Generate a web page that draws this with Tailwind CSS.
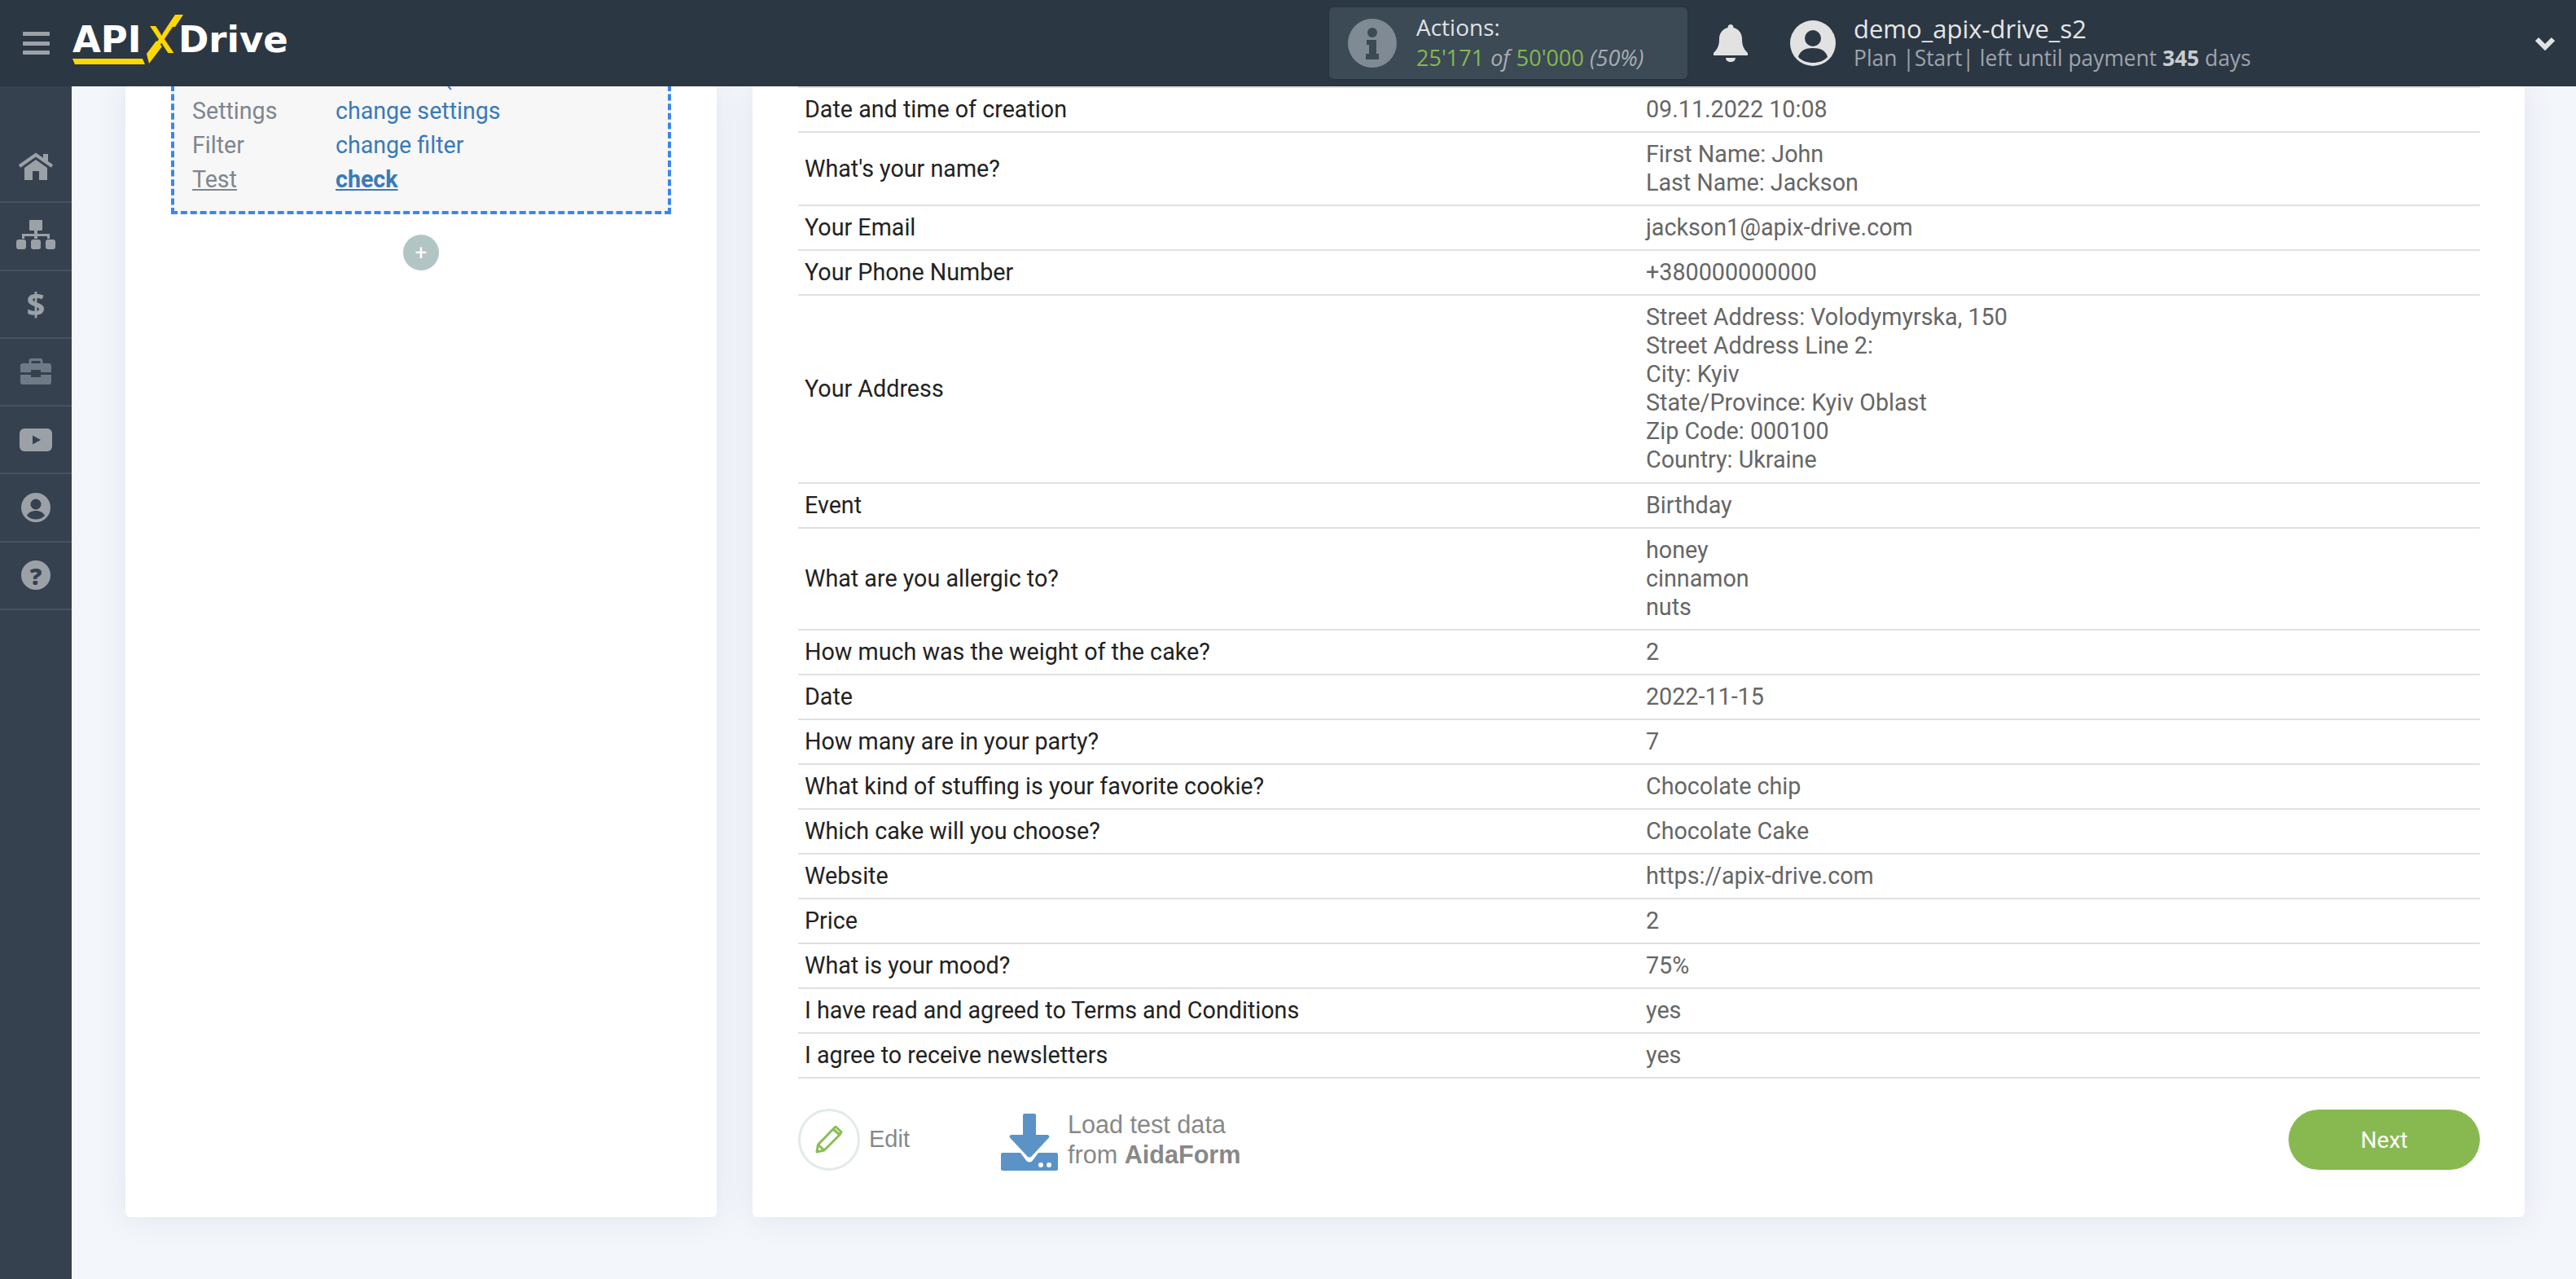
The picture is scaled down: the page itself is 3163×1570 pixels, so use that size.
<!doctype html>
<html lang="en">
<head>
<meta charset="utf-8">
<title>ApiX-Drive</title>
<script src="https://cdn.jsdelivr.net/npm/@tailwindcss/browser@4"></script>
</head>
<body class="h-[1570px] overflow-hidden bg-[#f3f6fb] font-['Roboto',sans-serif]">
  <!-- top bar -->
  <header class="relative z-10 flex h-[106px] items-center bg-[#2c3744] font-['Open_Sans',sans-serif]">
    <div class="ml-[28px] flex h-[28px] w-[33px] flex-col justify-between">
      <span class="h-[5px] rounded-[1px] bg-[#9ba1a7]"></span>
      <span class="h-[5px] rounded-[1px] bg-[#9ba1a7]"></span>
      <span class="h-[5px] rounded-[1px] bg-[#9ba1a7]"></span>
    </div>
    <!-- logo -->
    <div class="relative ml-[28px] h-[106px] w-[270px] font-['DejaVu_Sans',sans-serif] text-[45px] leading-none font-bold text-white">
      <span class="absolute left-0 top-[26px]">API</span>
      <span class="absolute left-[93px] top-[26px] font-['Inter',sans-serif] font-semibold text-[#ffd800]">X</span>
      <span class="absolute left-[130px] top-[26px]">Drive</span>
      <svg class="absolute left-0 top-0" width="270" height="106" viewBox="0 0 270 106">
        <path fill="#ffd800" d="M0 72h86l3 7H3zM126 33l10-15h-10l-10 15zM103 50 91 66l3 12 16-21z"/>
      </svg>
    </div>
    <div class="ml-[1273px] flex h-[88px] w-[440px] items-center rounded-md bg-[#3c4a55] shadow-sm">
      <svg class="ml-[23px] shrink-0" width="60" height="60" viewBox="0 0 60 60">
        <circle cx="30" cy="30" r="30" fill="#808a94"/>
        <circle cx="30" cy="17" r="6" fill="#3c4a55"/>
        <path fill="#3c4a55" d="M23 26h12v17h3v7H22v-7h4V32h-3z"/>
      </svg>
      <div class="ml-[24px] -mt-[2px] leading-[37px]">
        <div class="text-[28px] text-[#dfe2e5]">Actions:</div>
        <div class="text-[27px] text-[#a7adb3]"><span class="text-[#85b84e]">25'171</span> <i class="mx-[1px]">of</i> <span class="text-[#85b84e]">50'000</span> <i>(50%)</i></div>
      </div>
    </div>
    <svg class="ml-[32px] shrink-0" width="42" height="46" viewBox="0 0 42 46">
      <path fill="#e2e2e2" d="M21 0c2 0 3.500 1.500 3.500 4 7 1.500 10.500 7.500 10.500 14 0 9 3 13 7 17v3H0v-3c4-4 7-8 7-17 0-6.500 3.500-12.500 10.500-14C17.500 1.500 19 0 21 0zM15 41h12c0 3-2.500 5-6 5s-6-2-6-5z"/>
    </svg>
    <svg class="ml-[52px] shrink-0" width="56" height="56" viewBox="0 0 56 56">
      <circle cx="28" cy="28" r="28" fill="#e2e2e2"/>
      <circle cx="28" cy="22" r="10" fill="#2c3744"/>
      <path fill="#2c3744" d="M10 45c2-8 9-11 18-11s16 3 18 11c-5 5-11 7-18 7s-13-2-18-7z"/>
    </svg>
    <div class="ml-[22px] text-[#e6e6e6]">
      <div class="text-[31px] leading-[36px]">demo_apix-drive_s2</div>
      <div class="text-[26.400px] leading-[36px] text-[#9ea4aa]">Plan |Start| left until payment <b class="text-[#c9cccf]">345</b> days</div>
    </div>
    <svg class="ml-auto mr-[26px] shrink-0" width="24" height="18" viewBox="0 0 24 18">
      <path fill="none" stroke="#e2e2e2" stroke-width="6" d="M2 4l10 10L22 4"/>
    </svg>
  </header>

  <div class="flex h-[1464px]">
    <!-- side nav -->
    <nav class="w-[88px] shrink-0 bg-[#364150] pt-[60px]">
      <div class="flex h-[83.3px] items-center justify-center border-b-2 border-[#465260] pb-[5px]">
        <svg width="44" height="34" viewBox="0 0 44 34">
          <path fill="none" stroke="#9ba1a7" stroke-width="4" d="M2 17 22 3l20 14"/>
          <path fill="#9ba1a7" d="M31 2h6v11l-6-4zM8 19 22 9l14 10v15H26V23h-8v11H8z"/>
        </svg>
      </div>
      <div class="flex h-[83.3px] items-center justify-center border-b-2 border-[#465260] pb-[4px]">
        <svg width="48" height="36" viewBox="0 0 48 36">
          <path fill="#9ba1a7" d="M17 0h14a1 1 0 0 1 1 1v11a1 1 0 0 1-1 1h-5v4h15v6h-3v-3H26v3h-4v-3H10v3H7v-6h15v-4h-5a1 1 0 0 1-1-1V1a1 1 0 0 1 1-1z"/>
          <rect x="0" y="24" width="12" height="12" rx="3" fill="#9ba1a7"/>
          <rect x="18" y="24" width="12" height="12" rx="3" fill="#9ba1a7"/>
          <rect x="36" y="24" width="12" height="12" rx="3" fill="#9ba1a7"/>
        </svg>
      </div>
      <div class="flex h-[83.3px] items-center justify-center border-b-2 border-[#465260] font-['Open_Sans',sans-serif] text-[40px] leading-none font-bold text-[#9ba1a7]">$</div>
      <div class="flex h-[83.3px] items-center justify-center border-b-2 border-[#465260] pb-[2px]">
        <svg width="38" height="32" viewBox="0 0 38 32">
          <path fill="none" stroke="#6f7a87" stroke-width="3" d="M12 7V3a1.500 1.500 0 0 1 1.500-1.500h11A1.500 1.500 0 0 1 26 3v4"/>
          <path fill="#6f7a87" d="M3 6h32a3 3 0 0 1 3 3v8H25v-3H13v3H0V9a3 3 0 0 1 3-3zM0 20h13v3h12v-3h13v9a3 3 0 0 1-3 3H3a3 3 0 0 1-3-3z"/>
        </svg>
      </div>
      <div class="flex h-[83.3px] items-center justify-center border-b-2 border-[#465260]">
        <svg width="40" height="28" viewBox="0 0 40 28">
          <rect width="40" height="28" rx="6" fill="#9ba1a7"/>
          <path fill="#364150" d="M16 8.500v11l10-5.500z"/>
        </svg>
      </div>
      <div class="flex h-[83.3px] items-center justify-center border-b-2 border-[#465260]">
        <svg width="36" height="36" viewBox="0 0 36 36">
          <circle cx="18" cy="18" r="18" fill="#9ba1a7"/>
          <circle cx="18" cy="14" r="6.500" fill="#364150"/>
          <path fill="#364150" d="M7 28c2-4 6-6 11-6s9 2 11 6c-3 3-7 4.500-11 4.500S10 31 7 28z"/>
        </svg>
      </div>
      <div class="flex h-[83.3px] items-center justify-center border-b-2 border-[#465260]">
        <div class="flex h-[36px] w-[36px] items-center justify-center rounded-full bg-[#9ba1a7] font-['Open_Sans',sans-serif] text-[29px] leading-none font-extrabold text-[#364150]">?</div>
      </div>
    </nav>

    <main class="flex min-w-0 flex-1 items-start overflow-hidden">
      <!-- left card: steps -->
      <section class="ml-[66px] h-[1388px] w-[726px] rounded-b-md bg-white shadow-[0_0_40px_rgba(40,60,90,0.09)]">
        <div class="mx-[56px] -mt-[37px] border-4 border-dashed border-[#3b86f0] bg-[#f7f7f7] pb-[18px] pl-[22px] text-[28.600px] leading-[42px] text-[#7d8690]">
          <div class="grid grid-cols-[176px_1fr]"><span></span><span class="ml-[133px] text-[#3a7ab8]">(</span></div>
          <div class="grid grid-cols-[176px_1fr]"><span>Settings</span><a class="text-[#3a7ab8]">change settings</a></div>
          <div class="grid grid-cols-[176px_1fr]"><span>Filter</span><a class="text-[#3a7ab8]">change filter</a></div>
          <div class="grid grid-cols-[176px_1fr]"><span class="underline">Test</span><a class="font-bold text-[#3a7ab8] underline">check</a></div>
        </div>
        <div class="mt-[25px] flex justify-center">
          <div class="flex h-[44px] w-[44px] items-center justify-center rounded-full bg-[#b2c5c5] text-[26px] leading-none text-white">+</div>
        </div>
      </section>

      <!-- right card: test data -->
      <section class="ml-[44px] h-[1388px] w-[2176px] rounded-b-md bg-white pl-[56px] pr-[55px] shadow-[0_0_40px_rgba(40,60,90,0.09)]">
        <div class="border-t-2 border-[#e0e0e0] text-[28.700px] leading-[35px] text-[#666]">
          <div class="grid grid-cols-[1041px_1fr] items-center border-b-2 border-[#e0e0e0] py-[9px]"><span class="pl-[8px] text-[#222]">Date and time of creation</span><span>09.11.2022 10:08</span></div>
          <div class="grid grid-cols-[1041px_1fr] items-center border-b-2 border-[#e0e0e0] py-[9px]"><span class="pl-[8px] text-[#222]">What's your name?</span><span>First Name: John<br>Last Name: Jackson</span></div>
          <div class="grid grid-cols-[1041px_1fr] items-center border-b-2 border-[#e0e0e0] py-[9px]"><span class="pl-[8px] text-[#222]">Your Email</span><span>jackson1@apix-drive.com</span></div>
          <div class="grid grid-cols-[1041px_1fr] items-center border-b-2 border-[#e0e0e0] py-[9px]"><span class="pl-[8px] text-[#222]">Your Phone Number</span><span>+380000000000</span></div>
          <div class="grid grid-cols-[1041px_1fr] items-center border-b-2 border-[#e0e0e0] pt-[9px] pb-[10px]"><span class="pl-[8px] text-[#222]">Your Address</span><span>Street Address: Volodymyrska, 150<br>Street Address Line 2:<br>City: Kyiv<br>State/Province: Kyiv Oblast<br>Zip Code: 000100<br>Country: Ukraine</span></div>
          <div class="grid grid-cols-[1041px_1fr] items-center border-b-2 border-[#e0e0e0] py-[9px]"><span class="pl-[8px] text-[#222]">Event</span><span>Birthday</span></div>
          <div class="grid grid-cols-[1041px_1fr] items-center border-b-2 border-[#e0e0e0] py-[9px]"><span class="pl-[8px] text-[#222]">What are you allergic to?</span><span>honey<br>cinnamon<br>nuts</span></div>
          <div class="grid grid-cols-[1041px_1fr] items-center border-b-2 border-[#e0e0e0] py-[9px]"><span class="pl-[8px] text-[#222]">How much was the weight of the cake?</span><span>2</span></div>
          <div class="grid grid-cols-[1041px_1fr] items-center border-b-2 border-[#e0e0e0] py-[9px]"><span class="pl-[8px] text-[#222]">Date</span><span>2022-11-15</span></div>
          <div class="grid grid-cols-[1041px_1fr] items-center border-b-2 border-[#e0e0e0] py-[9px]"><span class="pl-[8px] text-[#222]">How many are in your party?</span><span>7</span></div>
          <div class="grid grid-cols-[1041px_1fr] items-center border-b-2 border-[#e0e0e0] py-[9px]"><span class="pl-[8px] text-[#222]">What kind of stuffing is your favorite cookie?</span><span>Chocolate chip</span></div>
          <div class="grid grid-cols-[1041px_1fr] items-center border-b-2 border-[#e0e0e0] py-[9px]"><span class="pl-[8px] text-[#222]">Which cake will you choose?</span><span>Chocolate Cake</span></div>
          <div class="grid grid-cols-[1041px_1fr] items-center border-b-2 border-[#e0e0e0] py-[9px]"><span class="pl-[8px] text-[#222]">Website</span><span>https://apix-drive.com</span></div>
          <div class="grid grid-cols-[1041px_1fr] items-center border-b-2 border-[#e0e0e0] py-[9px]"><span class="pl-[8px] text-[#222]">Price</span><span>2</span></div>
          <div class="grid grid-cols-[1041px_1fr] items-center border-b-2 border-[#e0e0e0] py-[9px]"><span class="pl-[8px] text-[#222]">What is your mood?</span><span>75%</span></div>
          <div class="grid grid-cols-[1041px_1fr] items-center border-b-2 border-[#e0e0e0] py-[9px]"><span class="pl-[8px] text-[#222]">I have read and agreed to Terms and Conditions</span><span>yes</span></div>
          <div class="grid grid-cols-[1041px_1fr] items-center border-b-2 border-[#e0e0e0] py-[9px]"><span class="pl-[8px] text-[#222]">I agree to receive newsletters</span><span>yes</span></div>
        </div>

        <div class="mt-[38px] flex h-[74px] items-center font-['Liberation_Sans',sans-serif] text-[#888]">
          <div class="flex h-[76px] w-[76px] shrink-0 items-center justify-center rounded-full border-[3px] border-[#e2eaea]">
            <svg width="34" height="34" viewBox="0 0 34 34">
              <path fill="none" stroke="#8bbd55" stroke-width="3" stroke-linejoin="round" d="M2 32l1.500-9L22 4l8 7L11 30zM3.500 23l7.500 7M25 1l7 6.500-2 3.500-8-7z"/>
            </svg>
          </div>
          <span class="ml-[11px] text-[29px]">Edit</span>
          <svg class="ml-[112px] mt-[6px] shrink-0" width="70" height="70" viewBox="0 0 70 70">
            <path fill="#5b93c7" d="M29 0h12a2 2 0 0 1 2 2v24h14c2 0 3 2 2 3.500L38 52c-1.500 2-4.500 2-6 0L11 29.500C10 28 11 26 13 26h14V2a2 2 0 0 1 2-2z"/>
            <path fill="#5b93c7" d="M2 48h22l7 9.500c2 2.500 6 2.500 8 0L46 48h22a2 2 0 0 1 2 2v18a2 2 0 0 1-2 2H2a2 2 0 0 1-2-2V50a2 2 0 0 1 2-2z"/>
            <circle cx="49" cy="63" r="3" fill="#fff"/>
            <circle cx="59" cy="63" r="3" fill="#fff"/>
          </svg>
          <div class="ml-[12px] text-[30.600px] leading-[37px]">Load test data<br>from <b>AidaForm</b></div>
          <button class="ml-auto h-[74px] w-[235px] rounded-full bg-[#88b951] pt-px font-['Roboto',sans-serif] text-[28px] text-white">Next</button>
        </div>
      </section>
    </main>
  </div>
</body>
</html>
